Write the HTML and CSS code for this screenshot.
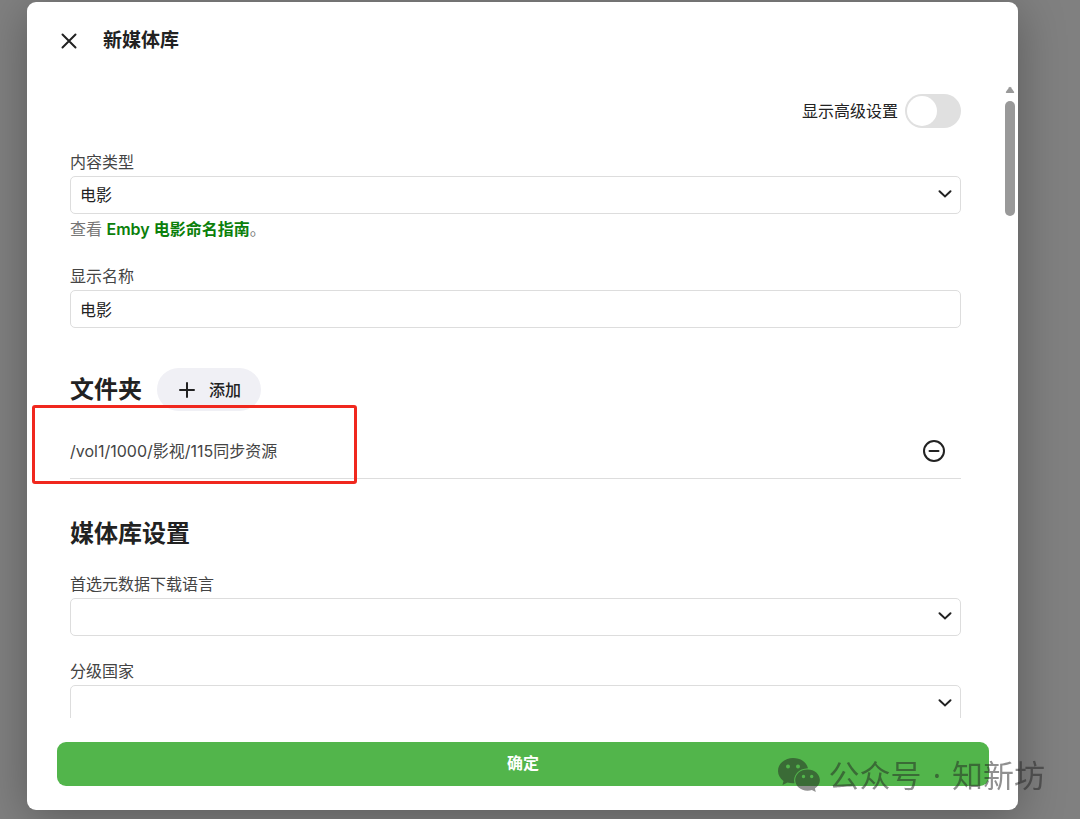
FILE: index.html
```html
<!DOCTYPE html>
<html lang="zh-CN">
<head>
    <meta charset="UTF-8">
    <meta name="viewport" content="width=device-width, initial-scale=1.0">
    <title>新媒体库</title>
    <link rel="stylesheet" href="styles.css">
</head>
<body>

<div class="dialog" role="dialog" aria-labelledby="dialogTitle">
    <header class="dialog-header">
        <button type="button" class="icon-button" aria-label="关闭">
            <svg width="24" height="24" viewBox="0 0 24 24"><path d="M5.5 5.5l13 13M18.5 5.5l-13 13"/></svg>
        </button>
        <h1 id="dialogTitle">新媒体库</h1>
    </header>

    <div class="dialog-body">
        <form class="library-form" id="libraryForm">
            <div class="toggle-row">
                <label for="advanced">显示高级设置</label>
                <input type="checkbox" class="toggle" id="advanced">
            </div>

            <div class="field">
                <label for="contentType">内容类型</label>
                <div class="select-box">
                    <select id="contentType">
                        <option>电影</option>
                    </select>
                    <svg class="chevron" width="16" height="16" viewBox="0 0 16 16"><path d="M2.5 5.2L8 10.4l5.5-5.2"/></svg>
                </div>
                <div class="help">查看 <a href="#">Emby 电影命名指南</a>。</div>
            </div>

            <div class="field">
                <label for="displayName">显示名称</label>
                <input type="text" class="text-box" id="displayName" value="电影">
            </div>

            <section class="folders">
                <div class="folders-header">
                    <h2>文件夹</h2>
                    <button type="button" class="add-button">
                        <svg width="20" height="20" viewBox="0 0 20 20"><path d="M10 3v14M3 10h14"/></svg>
                        <span>添加</span>
                    </button>
                </div>
                <div class="folder-item">
                    <span>/vol1/1000/影视/115同步资源</span>
                    <button type="button" class="icon-button" aria-label="移除">
                        <svg width="24" height="24" viewBox="0 0 24 24"><circle cx="12" cy="12" r="10"/><path d="M7.5 12h9"/></svg>
                    </button>
                    <div class="highlight"></div>
                </div>
            </section>

            <h2 class="section-title">媒体库设置</h2>

            <div class="field">
                <label for="language">首选元数据下载语言</label>
                <div class="select-box">
                    <select id="language">
                        <option></option>
                    </select>
                    <svg class="chevron" width="16" height="16" viewBox="0 0 16 16"><path d="M2.5 5.2L8 10.4l5.5-5.2"/></svg>
                </div>
            </div>

            <div class="field">
                <label for="country">分级国家</label>
                <div class="select-box">
                    <select id="country">
                        <option></option>
                    </select>
                    <svg class="chevron" width="16" height="16" viewBox="0 0 16 16"><path d="M2.5 5.2L8 10.4l5.5-5.2"/></svg>
                </div>
            </div>
        </form>

        <div class="scrollbar" aria-hidden="true">
            <svg width="10" height="8" viewBox="0 0 10 8"><path d="M4.2 1.2Q5 .2 5.8 1.2L9 5.8Q9.6 7 8.5 7h-7Q.4 7 1 5.8z"/></svg>
            <div class="scrollbar-thumb"></div>
        </div>
    </div>

    <footer class="dialog-footer">
        <button type="submit" form="libraryForm" class="submit-button">确定</button>
    </footer>
</div>

<div class="watermark">
    <svg width="42" height="36" viewBox="0 0 42 36">
        <path fill-rule="evenodd" d="M15 1C7 1 0 6.500 0 14c0 4 2.200 7.600 5.500 10L4.500 28l5-2.500c2 .6 4.500 1 7 .8C14.500 18.500 20.500 11.500 30 11.300 28.500 5 22.500 1 15 1zM10 7.500a2 2 0 1 1 0 4 2 2 0 0 1 0-4zM20 7.500a2 2 0 1 1 0 4 2 2 0 0 1 0-4z"/>
        <path fill-rule="evenodd" d="M29.500 12.500c-7 0-12.300 4.800-12.300 10.500s5.300 10.700 12.300 10.700c1.600 0 3-.2 4.400-.7l3.900 2-.9-3.500c3-2 5-5 5-8.500 0-5.700-5.400-10.500-12.400-10.500zM25.500 17.800a1.700 1.700 0 1 1 0 3.400 1.700 1.700 0 0 1 0-3.400zM33.700 17.800a1.700 1.700 0 1 1 0 3.400 1.700 1.700 0 0 1 0-3.400z"/>
    </svg>
    <div>公众号 <span class="dot">·</span> 知新坊</div>
</div>

</body>
</html>
```

FILE: styles.css
```css
* {
    box-sizing: border-box;
}
body {
    margin: 0;
    height: 100vh;
    padding: 2px 62px 9px 27px;
    display: flex;
    background: #808080;
    color: #222;
    font-family: Inter, "Noto Sans CJK SC", sans-serif;
    font-size: 16px;
    line-height: 24px;
    overflow: hidden;
}
h1, h2 {
    margin: 0;
    font-weight: 700;
}
h1 {
    font-size: 19px;
}
h2 {
    font-size: 24px;
    line-height: 34px;
}
button, input, select {
    font: inherit;
    color: inherit;
}
button {
    border: none;
    cursor: pointer;
}
svg {
    display: block;
    fill: none;
    stroke: #222;
    stroke-width: 2;
    stroke-linecap: round;
}
.dialog {
    flex: 1;
    min-width: 0;
    display: flex;
    flex-direction: column;
    background: #fff;
    border-radius: 9px;
    box-shadow: 0 8px 48px rgba(0, 0, 0, 0.3);
}
.dialog-header {
    display: flex;
    align-items: center;
    gap: 22px;
    height: 77px;
    padding: 0 30px;
}
.icon-button {
    padding: 0;
    background: none;
}
.dialog-body {
    flex: 1;
    min-height: 0;
    display: flex;
}
.library-form {
    flex: 1;
    min-width: 0;
    padding: 15px 44px 0 43px;
    overflow: hidden;
}
.toggle-row {
    display: flex;
    justify-content: flex-end;
    align-items: center;
    gap: 7px;
    margin-bottom: 22px;
}
.toggle {
    appearance: none;
    width: 56px;
    height: 34px;
    margin: 0;
    padding: 2px;
    border-radius: 17px;
    background: #e0e0e0;
    cursor: pointer;
}
.toggle::before {
    content: "";
    display: block;
    width: 30px;
    height: 30px;
    border-radius: 50%;
    background: #fff;
}
.toggle:checked {
    padding-left: 24px;
    background: #52b54b;
}
.field {
    margin-bottom: 23px;
}
.field label {
    display: block;
    margin-bottom: 2px;
    color: #444;
}
.select-box {
    position: relative;
}
.text-box, select {
    appearance: none;
    display: block;
    width: 100%;
    height: 38px;
    padding: 0 9px;
    border: 1px solid #ddd;
    border-radius: 5px;
    background: #fff;
}
.chevron {
    position: absolute;
    right: 8px;
    top: 10px;
    pointer-events: none;
}
.help {
    margin-top: 3px;
    color: #777;
}
.help a {
    color: #0b800b;
    font-weight: 600;
    text-decoration: none;
}
.folders {
    padding-top: 17px;
}
.folders-header {
    display: flex;
    align-items: center;
    gap: 15px;
}
.add-button {
    display: flex;
    align-items: center;
    gap: 12px;
    height: 43px;
    padding: 0 20px;
    border-radius: 22px;
    background: #f0f0f5;
    font-weight: 500;
}
.folder-item {
    position: relative;
    display: flex;
    justify-content: space-between;
    align-items: center;
    height: 68px;
    padding: 12px 15px 0 0;
    border-bottom: 1px solid #ddd;
    color: #444;
}
/* marks the folder path */
.highlight {
    position: absolute;
    left: -38px;
    top: -6px;
    width: 325px;
    height: 79px;
    border: 3px solid #f0281e;
    border-radius: 3px;
    pointer-events: none;
}
.section-title {
    margin: 38px 0 21px;
}
.scrollbar {
    width: 13px;
    padding-top: 7px;
}
.scrollbar svg {
    fill: #999;
    stroke: none;
}
.scrollbar-thumb {
    width: 10px;
    height: 115px;
    margin-top: 7px;
    border-radius: 5px;
    background: #999;
}
.dialog-footer {
    padding: 24px 29px 24px 30px;
}
.submit-button {
    width: 100%;
    height: 44px;
    padding: 0 0 2px;
    border-radius: 9px;
    background: #52b54b;
    color: #fff;
    font-weight: 600;
}
.watermark {
    position: fixed;
    right: 35px;
    bottom: 21px;
    display: flex;
    align-items: center;
    gap: 9px;
    font-family: "Noto Sans", "Noto Sans CJK SC", sans-serif;
    font-size: 31px;
    line-height: 46px;
    opacity: 0.5;
    pointer-events: none;
}
.watermark svg {
    fill: #222;
    stroke: none;
}
.watermark .dot {
    margin: 0 3px;
}
```
